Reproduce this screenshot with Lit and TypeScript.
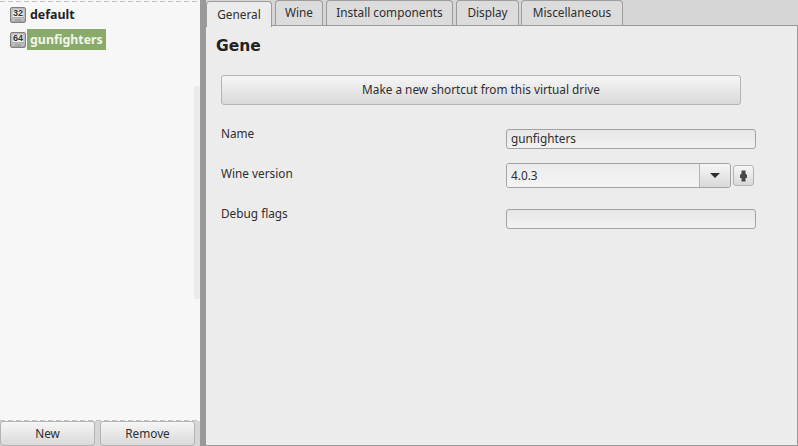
import { LitElement, html, css, svg } from "lit";
import { customElement } from "lit/decorators.js";

const drive = (label: string) => html`<svg class="drive" width="16" height="16" viewBox="0 0 16 16">
  <rect x="0.5" y="0.5" width="15" height="15" rx="1.5" fill="#d2d2d2" stroke="#808080"/>
  <rect x="2" y="2" width="12" height="8.5" fill="#ededed" stroke="#8a8a8a" stroke-width="0.6"/>
  <rect x="1" y="11.5" width="14" height="3.5" fill="#a6a6a6"/>
  <rect x="2.5" y="12.5" width="2" height="1" fill="#eee"/>
  <rect x="11.5" y="12.5" width="2" height="1" fill="#eee"/>
  ${svg`<text x="8" y="9.2" text-anchor="middle" font-family="Liberation Sans, sans-serif" font-size="9" font-weight="700" fill="#333">${label}</text>`}
</svg>`;

@customElement("app-root")
export class AppRoot extends LitElement {
  static styles = css`
    :host {
      display: flex;
      width: 798px;
      height: 446px;
      overflow: hidden;
      font-family: "Noto Sans", "Open Sans", sans-serif;
      font-size: 11.8px;
      color: #2e2e2e;
      background: #d6d6d6;
    }
    * { box-sizing: border-box; }
    .side {
      width: 200px;
      flex: none;
      display: flex;
      flex-direction: column;
    }
    .list {
      flex: 1;
      position: relative;
      background-color: #f7f7f7;
      background-image:
        repeating-linear-gradient(90deg, #c2c2c2 0 5px, transparent 5px 8px),
        repeating-linear-gradient(90deg, #c2c2c2 0 5px, transparent 5px 8px);
      background-size: 100% 1px, 100% 1px;
      background-position: 0 1px, 0 100%;
      background-repeat: no-repeat;
      padding-top: 4px;
      display: flex;
      flex-direction: column;
      gap: 4px;
    }
    .item {
      height: 21px;
      display: flex;
      align-items: center;
      padding-left: 10px;
      gap: 1px;
      font-weight: 700;
      font-size: 12.4px;
      color: #222;
    }
    .item span { padding: 0 3px; height: 21px; line-height: 22px; }
    .item.sel span { background: #8aaa6c; color: #f0f5ea; }
    .drive { flex: none; }
    .thumb {
      position: absolute;
      right: 0;
      top: 86px;
      width: 6px;
      height: 213px;
      background: #ebebeb;
      border-radius: 2px;
    }
    .side-btns {
      display: flex;
      gap: 5px;
      padding-right: 5px;
      height: 25px;
    }
    .btn {
      border: 1px solid #b4b4b4;
      border-radius: 3px;
      background: linear-gradient(#f6f6f6, #d9d9d9);
      color: #2e2e2e;
      display: flex;
      align-items: center;
      justify-content: center;
      font: inherit;
      padding: 0 0 2px;
    }
    .side-btns .btn { flex: 1; }
    .split { width: 6px; flex: none; background: #999; }
    .main { flex: 1; display: flex; flex-direction: column; min-width: 0; }
    .tabs {
      display: flex;
      height: 26px;
      align-items: flex-start;
      gap: 3px;
      border-bottom: 1px solid #999;
      background: #d6d6d6;
    }
    .tab {
      height: 25px;
      border: 1px solid #9c9c9c;
      border-bottom: none;
      border-radius: 4px 4px 0 0;
      background: #dcdcdc;
      display: flex;
      align-items: center;
      justify-content: center;
      padding-bottom: 3px;
    }
    .tab.on {
      height: 26px;
      margin-top: 1px;
      background: #ececec;
      position: relative;
      padding-bottom: 2px;
    }
    .panel {
      flex: 1;
      background: #ececec;
      border-right: 1px solid #999;
      border-bottom: 1px solid #999;
      padding: 0 0 0 10px;
    }
    .title {
      font-family: "DejaVu Sans", sans-serif;
      font-size: 15.5px;
      font-weight: 700;
      line-height: 20px;
      margin: 10px 0 19px;
      color: #222;
    }
    .wide { width: 520px; height: 30px; margin-left: 5px; }
    .form {
      margin: 19px 0 0 5px;
      display: flex;
    }
    .labels {
      width: 285px;
      display: flex;
      flex-direction: column;
      gap: 22px;
      line-height: 18px;
    }
    .fields { width: 250px; padding-top: 5px; display: flex; flex-direction: column; }
    .field {
      height: 20px;
      border: 1px solid #a3a3a3;
      border-radius: 3px;
      background: linear-gradient(#e6e6e6, #f2f2f2);
      padding: 0 4px;
      line-height: 16px;
    }
    .ver { display: flex; align-items: flex-start; gap: 2px; margin: 14px 0 21px; }
    .combo {
      width: 225px;
      height: 25px;
      display: flex;
      border: 1px solid #a3a3a3;
      border-radius: 3px;
      background: #f2f2f2;
      overflow: hidden;
    }
    .combo .val { flex: 1; padding: 0 4px; line-height: 22px; background: linear-gradient(#ececec, #f4f4f4); }
    .combo .arrow {
      width: 31px;
      border-left: 1px solid #b4b4b4;
      background: linear-gradient(#f6f6f6, #d9d9d9);
      display: flex;
      align-items: center;
      justify-content: center;
    }
    .plus { width: 21px; height: 21px; margin-top: 2px; padding: 0; }
  `;

  render() {
    return html`
      <div class="side">
        <div class="list">
          <div class="item">${drive("32")}<span>default</span></div>
          <div class="item sel">${drive("64")}<span>gunfighters</span></div>
          <div class="thumb"></div>
        </div>
        <div class="side-btns">
          <button class="btn">New</button>
          <button class="btn">Remove</button>
        </div>
      </div>
      <div class="split"></div>
      <div class="main">
        <div class="tabs">
          <div class="tab on" style="width:66px">General</div>
          <div class="tab" style="width:48px">Wine</div>
          <div class="tab" style="width:127px">Install components</div>
          <div class="tab" style="width:63px">Display</div>
          <div class="tab" style="width:102px;margin-left:-1px">Miscellaneous</div>
        </div>
        <div class="panel">
          <div class="title">Gene</div>
          <button class="btn wide">Make a new shortcut from this virtual drive</button>
          <div class="form">
            <div class="labels">
              <label>Name</label>
              <label>Wine version</label>
              <label>Debug flags</label>
            </div>
            <div class="fields">
              <div class="field">gunfighters</div>
              <div class="ver">
                <div class="combo">
                  <div class="val">4.0.3</div>
                  <div class="arrow">
                    <svg width="10" height="5" viewBox="0 0 10 5"><path d="M0 0h10L5 5z" fill="#2e2e2e"/></svg>
                  </div>
                </div>
                <button class="btn plus">
                  <svg width="7" height="12" viewBox="0 0 7 12"><path d="M1.5 0.5h4v3L7 5v3H5.5v3.5h-4V8H0V5l1.5-1.5z" fill="#484848"/></svg>
                </button>
              </div>
              <div class="field"></div>
            </div>
          </div>
        </div>
      </div>
    `;
  }
}
